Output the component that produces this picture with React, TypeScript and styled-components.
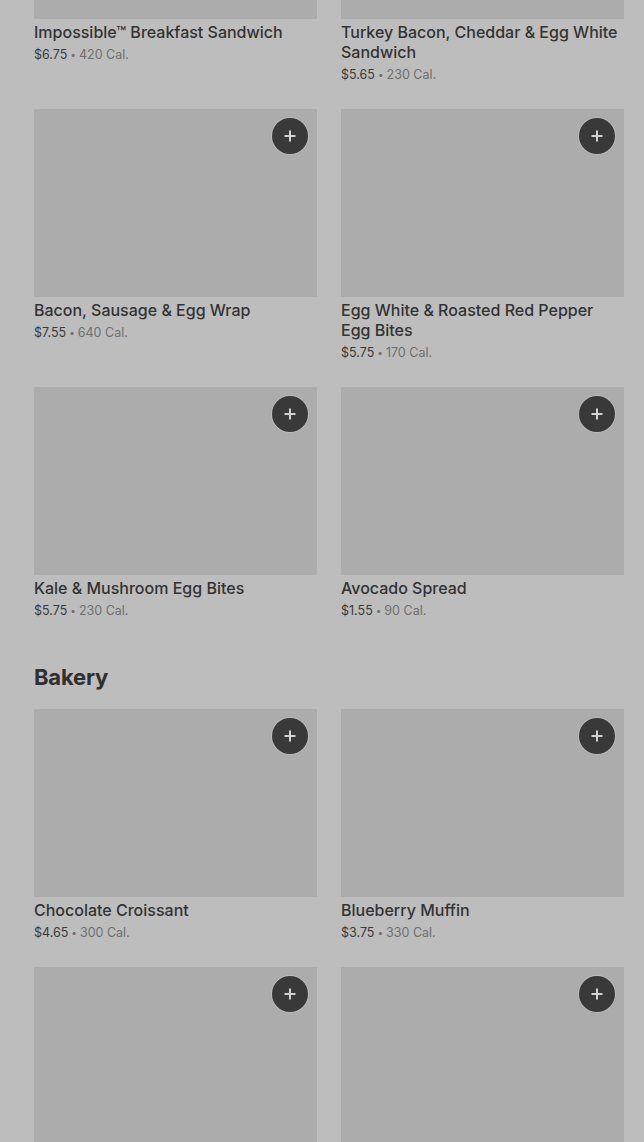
import React from "react";
import styled, { createGlobalStyle } from "styled-components";

const Global = createGlobalStyle`
  html, body { margin: 0; padding: 0; background: #bdbdbd; }
  body { font-family: "Inter", "Liberation Sans", sans-serif; overflow: hidden; }
`;

const Page = styled.div`
  width: 644px;
  height: 1142px;
  overflow: hidden;
  background: #bdbdbd;
`;

const Content = styled.div`
  margin-top: -169px;
  padding: 0 20px 0 34px;
  display: flex;
  flex-direction: column;
`;

const Section = styled.section`
  display: flex;
  flex-direction: column;
`;

const SectionTitle = styled.h2`
  margin: 44px 0 20px;
  font-size: 22px;
  line-height: 24px;
  font-weight: 700;
  color: #2f2f2f;
  letter-spacing: -0.2px;
`;

const Grid = styled.div`
  display: grid;
  grid-template-columns: 283px 283px;
  column-gap: 24px;
  row-gap: 24px;
`;

const Card = styled.div`
  display: flex;
  flex-direction: column;
`;

const Thumb = styled.div`
  position: relative;
  height: 188px;
  background: #acacac;
`;

const AddButton = styled.button`
  position: absolute;
  top: 9px;
  right: 9px;
  width: 36px;
  height: 36px;
  border-radius: 50%;
  border: none;
  padding: 0;
  background: #393939;
  box-shadow: 0 0 0 1px rgba(200, 200, 200, 0.5);
  display: flex;
  align-items: center;
  justify-content: center;
`;

const Name = styled.div`
  margin-top: 3px;
  font-size: 16px;
  line-height: 20px;
  font-weight: 500;
  color: #333333;
`;

const Meta = styled.div`
  margin-top: 3px;
  height: 20px;
  font-size: 12.5px;
  line-height: 20px;
  color: #6e6e6e;
`;

const Price = styled.span`
  color: #3a3a3a;
`;

const Dot = styled.span`
  margin: 0 3px;
  font-size: 10px;
  line-height: 1;
  vertical-align: 1px;
  color: #6e6e6e;
`;

type Item = { name: string; price: string; cal: string };

const breakfast: Item[] = [
  { name: "Impossible™ Breakfast Sandwich", price: "$6.75", cal: "420 Cal." },
  { name: "Turkey Bacon, Cheddar & Egg White Sandwich", price: "$5.65", cal: "230 Cal." },
  { name: "Bacon, Sausage & Egg Wrap", price: "$7.55", cal: "640 Cal." },
  { name: "Egg White & Roasted Red Pepper Egg Bites", price: "$5.75", cal: "170 Cal." },
  { name: "Kale & Mushroom Egg Bites", price: "$5.75", cal: "230 Cal." },
  { name: "Avocado Spread", price: "$1.55", cal: "90 Cal." },
];

const bakery: Item[] = [
  { name: "Chocolate Croissant", price: "$4.65", cal: "300 Cal." },
  { name: "Blueberry Muffin", price: "$3.75", cal: "330 Cal." },
  { name: "Butter Croissant", price: "$3.45", cal: "260 Cal." },
  { name: "Banana Nut Bread", price: "$3.95", cal: "410 Cal." },
];

const Plus = () => (
  <svg width="14" height="14" viewBox="0 0 14 14" fill="none">
    <path d="M7 1.5v11M1.5 7h11" stroke="#d2d2d2" strokeWidth="2" />
  </svg>
);

const ItemCard = ({ item }: { item: Item }) => (
  <Card>
    <Thumb>
      <AddButton aria-label="Add">
        <Plus />
      </AddButton>
    </Thumb>
    <Name>{item.name}</Name>
    <Meta>
      <Price>{item.price}</Price>
      <Dot>•</Dot>
      {item.cal}
    </Meta>
  </Card>
);

export default function App() {
  return (
    <Page>
      <Global />
      <Content>
        <Section>
          <Grid>
            {breakfast.map((it) => (
              <ItemCard key={it.name} item={it} />
            ))}
          </Grid>
        </Section>
        <Section>
          <SectionTitle>Bakery</SectionTitle>
          <Grid>
            {bakery.map((it) => (
              <ItemCard key={it.name} item={it} />
            ))}
          </Grid>
        </Section>
      </Content>
    </Page>
  );
}
